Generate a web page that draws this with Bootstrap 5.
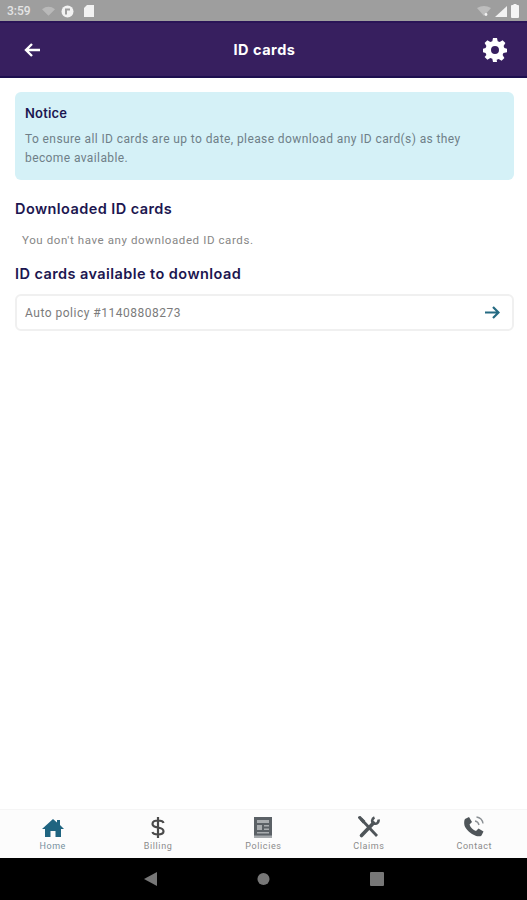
<!DOCTYPE html>
<html lang="en">
<head>
    <meta charset="UTF-8">
    <meta name="viewport" content="width=device-width, initial-scale=1.0">
    <title>ID cards</title>
    <link href="https://cdn.jsdelivr.net/npm/bootstrap@5.3.0/dist/css/bootstrap.min.css" rel="stylesheet">
    <style>
        body {
            font-family: Roboto, "Liberation Sans", sans-serif;
            background: #fff;
        }
        .phone {
            height: 900px;
            overflow: hidden;
        }
        .status-bar {
            height: 21px;
            background: #9e9e9e;
            color: #e4e4e4;
            font-size: 12px;
            font-weight: 500;
            padding: 1px 8px 0 7px;
        }
        .status-left {
            gap: 6px;
        }
        .status-time {
            margin-right: 5px;
        }
        .app-header {
            height: 57px;
            background: #371f5f;
            border-top: 2px solid #2a1457;
            border-bottom: 2px solid #1d0f4f;
            padding: 0 20px 0 24px;
        }
        .app-title {
            font-family: Inter, Roboto, sans-serif;
            font-size: 14.5px;
            font-weight: 700;
            letter-spacing: .5px;
            color: #fff;
            margin-left: 6px;
        }
        .page-body {
            padding: 14px 13px 0 15px;
        }
        .notice-box {
            background: #d5f1f7;
            border-radius: 6px;
            padding: 12px 40px 12px 10px;
            height: 88px;
            margin-bottom: 19px;
        }
        .notice-title {
            font-family: Inter, Roboto, sans-serif;
            font-size: 13px;
            font-weight: 600;
            letter-spacing: .2px;
            color: #1c1650;
            line-height: 18px;
            margin-bottom: 8px;
        }
        .notice-text {
            font-size: 12px;
            line-height: 18.5px;
            color: #6f7f88;
            letter-spacing: .4px;
        }
        .sect-title {
            font-family: Inter, Roboto, sans-serif;
            font-size: 14.5px;
            font-weight: 600;
            letter-spacing: .43px;
            line-height: 20px;
            color: #1c1650;
            margin: 0;
        }
        .empty-text {
            font-size: 11.5px;
            color: #868686;
            line-height: 16px;
            padding: 13px 0 16px 7px;
            letter-spacing: .6px;
        }
        .policy-row {
            height: 37px;
            border: 2px solid #f0f0f0;
            border-radius: 6px;
            padding: 0 12px 0 8px;
            margin-top: 10px;
            font-size: 12px;
            color: #7b7b7b;
            letter-spacing: .5px;
        }
        .tab-bar {
            height: 49px;
            background: #fcfcfc;
            border-top: 1px solid #f5f5f5;
        }
        .tab-item {
            width: 20%;
            font-size: 9px;
            letter-spacing: .6px;
            color: #8b8b8b;
            line-height: 11px;
            padding-top: 6px;
        }
        .tab-item svg {
            display: block;
            height: 23px;
            margin-bottom: 2px;
        }
        .tab-item.active {
            color: #76909c;
        }
        .nav-bar {
            height: 42px;
            background: #000;
            padding: 0 2px 0 3px;
        }
        .nav-icons {
            gap: 100px;
        }
    </style>
</head>
<body>
    <div class="phone d-flex flex-column">
        <!-- Status bar -->
        <div class="status-bar d-flex align-items-center justify-content-between">
            <div class="status-left d-flex align-items-center">
                <span class="status-time">3:59</span>
                <svg width="13" height="10" viewBox="0 0 14 10"><path d="M0 3Q7-2 14 3L7 10Z" fill="#b9b9b9"/></svg>
                <svg width="13" height="13" viewBox="0 0 13 13"><circle cx="6.500" cy="6.500" r="6" fill="#f2f2f2"/><path d="M4 3.500h5v2H6v4H4z" fill="#9e9e9e"/></svg>
                <svg width="10" height="12" viewBox="0 0 10 12" class="ms-1"><path d="M3 0h7v12H0V3z" fill="#f2f2f2"/></svg>
            </div>
            <div class="d-flex align-items-center gap-1">
                <svg width="14" height="10" viewBox="0 0 14 10"><path d="M0 2Q7-2 14 2L7 10Z" fill="#bdbdbd"/><circle cx="9" cy="8.500" r="1.400" fill="#f2f2f2"/></svg>
                <svg width="12" height="11" viewBox="0 0 12 11"><path d="M12 0V11H0Z" fill="#f2f2f2"/></svg>
                <svg width="8" height="14" viewBox="0 0 8 14"><path d="M2.500 0h3v1H7a1 1 0 0 1 1 1v11a1 1 0 0 1-1 1H1a1 1 0 0 1-1-1V2a1 1 0 0 1 1-1h1.500z" fill="#f5f5f5"/></svg>
            </div>
        </div>

        <!-- Header -->
        <div class="app-header d-flex align-items-center justify-content-between">
            <svg width="16" height="14" viewBox="0 0 16 14" fill="none" stroke="#fff" stroke-width="2.400"><path d="M16 7H2M8 1 2 7l6 6"/></svg>
            <div class="app-title">ID cards</div>
            <svg width="24" height="24" viewBox="0 0 24 24"><path fill="#fff" fill-rule="evenodd" d="M10 0h4l.7 3.300 2 .8L19.600 2.300l2.800 2.800-1.800 2.900.8 2L24 10.700v3.600l-3.600.7-.8 2 1.800 2.900-2.800 2.800-2.900-1.800-2 .8L14 24h-4l-.7-3.300-2-.8-2.900 1.800-2.800-2.800L3.400 17l-.8-2L0 14.300v-3.600L2.600 10l.8-2L1.600 5.100l2.800-2.800L7.300 4.100l2-.8zM12 8a4 4 0 1 0 0 8 4 4 0 0 0 0-8z"/></svg>
        </div>

        <!-- Content -->
        <div class="page-body flex-grow-1">
            <div class="notice-box">
                <div class="notice-title">Notice</div>
                <div class="notice-text">To ensure all ID cards are up to date, please download any ID card(s) as they become available.</div>
            </div>
            <h2 class="sect-title">Downloaded ID cards</h2>
            <div class="empty-text">You don't have any downloaded ID cards.</div>
            <h2 class="sect-title">ID cards available to download</h2>
            <div class="policy-row d-flex align-items-center justify-content-between">
                <span>Auto policy #11408808273</span>
                <svg width="15" height="13" viewBox="0 0 15 13" fill="none" stroke="#256a82" stroke-width="2.200"><path d="M0 6.500h13M8 1l5.500 5.500L8 12"/></svg>
            </div>
        </div>

        <!-- Tab bar -->
        <div class="tab-bar d-flex">
            <div class="tab-item active d-flex flex-column align-items-center">
                <svg width="22" height="23" viewBox="0 0 22 23"><path fill="#1f6480" d="M11 3 15 6.500V4h3v5l4 4h-3v8h-5.500v-6h-5v6H3v-8H0z"/></svg>
                <span>Home</span>
            </div>
            <div class="tab-item d-flex flex-column align-items-center">
                <svg width="14" height="23" viewBox="0 0 14 23" fill="none" stroke="#4a4a4a" stroke-width="2.200"><path d="M12.500 7C12 5 10 4.500 7 4.500S1.500 5.500 1.500 8 4 11 7 11.500s5.500 1.200 5.500 3.800S10 18.500 7 18.500 2 18 1.500 16M7 1v21"/></svg>
                <span>Billing</span>
            </div>
            <div class="tab-item d-flex flex-column align-items-center">
                <svg width="20" height="23" viewBox="0 0 20 23"><path fill="#5b6166" d="M1 1h18v21H1z"/><path fill="#a9adb0" d="M4 4h12v3H4zM4 9h5v5H4zM11 9h5v1.500h-5zM11 12.500h5V14h-5zM4 16h12v1.500H4z"/><path fill="#a5a9ac" d="M1 19.500h18V22H1z"/></svg>
                <span>Policies</span>
            </div>
            <div class="tab-item d-flex flex-column align-items-center">
                <svg width="22" height="23" viewBox="0 0 22 23" fill="none" stroke="#4f5559"><path stroke-width="2.800" d="M3 3l16 17"/><path stroke-width="2" d="M1 1.500 2 1l4 4-1 1z"/><path stroke-width="3.600" stroke-linecap="round" d="M15.500 7 3.500 19.500"/><path stroke-width="2.600" d="M20.500 3.500c.5 2.500-1.500 5-4.500 4s-2-5 .5-6"/></svg>
                <span>Claims</span>
            </div>
            <div class="tab-item d-flex flex-column align-items-center">
                <svg width="22" height="23" viewBox="0 0 22 23"><path fill="#4f5559" d="M2 3 6 1l3 5-2.500 2.500c1 3 3.500 5.500 6.500 6.500l2.500-2.500 5 3-2 4c-1.500 1.500-5 1-8.500-1S2.500 13 1.500 9.500C1 7 1 4.500 2 3z"/><path fill="none" stroke="#8a8f93" stroke-width="1.300" d="M12 5c2 .3 3.500 1.700 4 4M13.500 1c3.500.5 6 3 6.500 6.500"/></svg>
                <span>Contact</span>
            </div>
        </div>

        <!-- Android nav -->
        <div class="nav-bar d-flex align-items-center justify-content-center">
            <div class="nav-icons d-flex align-items-center">
                <svg width="13" height="14" viewBox="0 0 13 14"><path fill="#777" d="M13 0V14L0 7Z"/></svg>
                <svg width="13" height="14" viewBox="0 0 14 14"><circle cx="7" cy="7" r="6.500" fill="#777"/></svg>
                <svg width="14" height="14" viewBox="0 0 14 14"><rect width="14" height="14" rx="1" fill="#777"/></svg>
            </div>
        </div>
    </div>
    <script src="https://cdn.jsdelivr.net/npm/bootstrap@5.3.0/dist/js/bootstrap.bundle.min.js"></script>
</body>
</html>
